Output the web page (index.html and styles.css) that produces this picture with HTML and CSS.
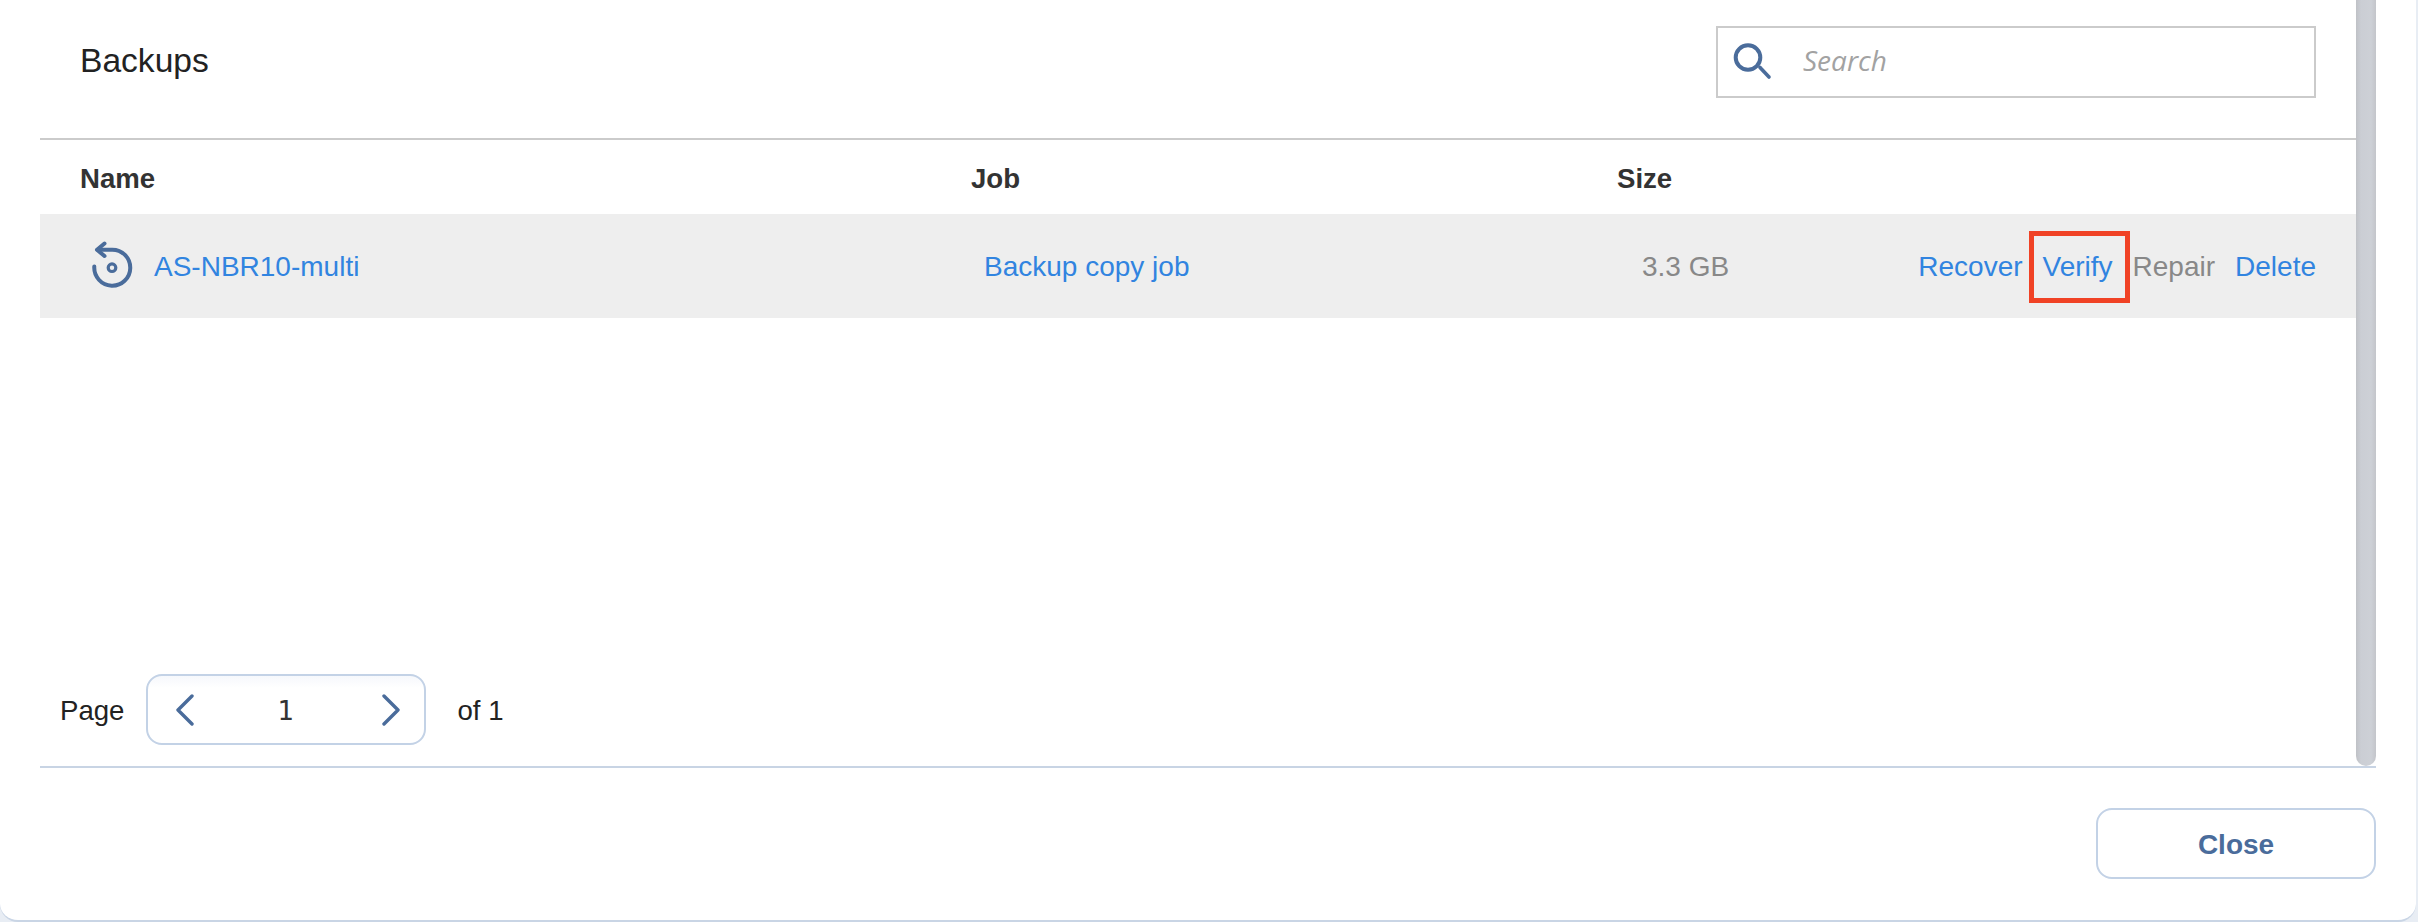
FILE: index.html
```html
<!DOCTYPE html>
<html lang="en">
<head>
<meta charset="utf-8">
<title>Backups</title>
<link rel="stylesheet" href="styles.css">
</head>
<body>
<div class="modal">
  <div class="content">
    <div class="main">
      <header class="top">
        <h1 class="title">Backups</h1>
        <div class="search">
          <svg class="search-icon" width="40" height="40" viewBox="0 0 40 40" fill="none" stroke="#4a6c9b" stroke-linecap="round">
            <circle cx="15" cy="15.5" r="12.3" stroke-width="4"/>
            <path d="M27 25.5 36 35" stroke-width="3.6"/>
          </svg>
          <span class="search-text">Search</span>
        </div>
      </header>
      <div class="grid head">
        <div class="h-name">Name</div>
        <div>Job</div>
        <div>Size</div>
      </div>
      <div class="grid row">
        <div class="cell-name">
          <svg class="disc" width="44" height="50" viewBox="0 0 44 50" fill="none" stroke="#4a6c9b" stroke-linecap="round" stroke-linejoin="round">
            <path d="M4.3 25.5A18 18 0 1 0 22 8.7H7.5" stroke-width="4"/>
            <path d="M14.5 2.5 7 8.7 14.5 15" stroke-width="4"/>
            <circle cx="22" cy="26.7" r="3.8" stroke-width="3.2"/>
          </svg>
          <a class="link">AS-NBR10-multi</a>
        </div>
        <div class="cell-job"><a class="link">Backup copy job</a></div>
        <div class="cell-size">
          <span class="muted size">3.3 GB</span>
          <div class="actions">
            <a class="link">Recover</a>
            <a class="link marked">Verify</a>
            <span class="muted">Repair</span>
            <a class="link">Delete</a>
          </div>
        </div>
      </div>
      <div class="pager-row">
        <span class="label">Page</span>
        <div class="pager">
          <svg width="18" height="32" viewBox="0 0 18 32" fill="none" stroke="#4a6c9b" stroke-width="3.4" stroke-linecap="round" stroke-linejoin="round"><path d="M16 2 2 16l14 14"/></svg>
          <span class="page-num">1</span>
          <svg width="18" height="32" viewBox="0 0 18 32" fill="none" stroke="#4a6c9b" stroke-width="3.4" stroke-linecap="round" stroke-linejoin="round"><path d="M2 2l14 14L2 30"/></svg>
        </div>
        <span class="label">of 1</span>
      </div>
    </div>
    <div class="scrollbar"></div>
  </div>
  <footer class="footer">
    <button class="close">Close</button>
  </footer>
</div>
</body>
</html>
```
FILE: styles.css
```css
html, body {
  margin: 0;
  height: 922px;
  overflow: hidden;
  background: #e8edf4;
}

body {
  font-family: "Liberation Sans", Arial, sans-serif;
}

.modal {
  box-sizing: border-box;
  width: 2416px;
  height: 922px;
  display: flex;
  flex-direction: column;
  background: #fff;
  border-bottom: 2px solid #c9d5e5;
  border-radius: 0 0 18px 18px;
}

.content {
  box-sizing: border-box;
  height: 768px;
  margin: 0 40px;
  display: flex;
  border-bottom: 2px solid #c8d4e4;
}

.main {
  flex: 1;
  display: flex;
  flex-direction: column;
  min-width: 0;
}

.scrollbar {
  width: 20px;
  border-radius: 0 0 10px 10px;
  background: linear-gradient(90deg, #bfc1c6, #cbced4 25%, #cdd0d6 75%, #c3c5ca);
}

.top {
  box-sizing: border-box;
  height: 140px;
  flex: none;
  display: flex;
  justify-content: space-between;
  align-items: flex-start;
  padding: 26px 40px 0 40px;
  border-bottom: 2px solid #cbcbcb;
}

.title {
  margin: -1px 0 0;
  font-size: 33.6px;
  line-height: 72px;
  font-weight: 400;
  color: #222;
}

.search {
  box-sizing: border-box;
  width: 600px;
  height: 72px;
  display: flex;
  align-items: center;
  gap: 30px;
  padding-left: 15px;
  border: 2px solid #cbcbcb;
}

.search-icon {
  flex: none;
}

.search-text {
  font-family: "Open Sans", sans-serif;
  font-style: italic;
  font-size: 28px;
  line-height: 36px;
  margin-top: -4px;
  color: #a2a2a2;
}

.grid {
  display: grid;
  grid-template-columns: 931px 646px 1fr;
  align-items: center;
  flex: none;
}

.head {
  box-sizing: border-box;
  height: 74px;
  padding-top: 4px;
  font-size: 27.6px;
  font-weight: 700;
  color: #333;
}

.h-name {
  padding-left: 40px;
}

.row {
  height: 104px;
  background: #eee;
  font-size: 28px;
}

.cell-name {
  display: flex;
  align-items: center;
  padding-left: 50px;
  gap: 20px;
}

.disc {
  flex: none;
}

.cell-name .link,
.cell-job,
.cell-size {
  padding-top: 2px;
}

.cell-job {
  padding-left: 13px;
}

.cell-size {
  display: flex;
  justify-content: space-between;
  align-items: center;
  padding: 2px 40px 0 25px;
}

.link {
  color: #3184e0;
}

.muted {
  color: #888;
}

.actions {
  display: flex;
  gap: 20px;
}

.marked {
  position: relative;
}

.marked::after {
  content: "";
  position: absolute;
  left: -14px;
  right: -17px;
  top: -20px;
  height: 72px;
  box-sizing: border-box;
  border: 5px solid #f04225;
}

.pager-row {
  margin-top: auto;
  margin-bottom: 21px;
  display: flex;
  align-items: center;
  padding-left: 20px;
  font-size: 27.6px;
  color: #222;
}

.label {
  padding-top: 2px;
}

.label:last-child {
  margin-left: 31px;
}

.pager {
  box-sizing: border-box;
  width: 280px;
  height: 71px;
  margin-left: 22px;
  display: flex;
  align-items: center;
  justify-content: space-between;
  padding: 0 24px 0 28px;
  border: 2px solid #c3d2e6;
  border-radius: 16px;
  background: linear-gradient(#f6f8fc, #fff 12px);
}

.page-num {
  font-family: "DejaVu Sans Mono", "Liberation Mono", monospace;
  font-size: 27px;
  margin-left: -6px;
  padding-top: 1px;
  color: #333;
}

.footer {
  flex: 1;
  display: flex;
  justify-content: flex-end;
  align-items: flex-start;
  padding: 40px 40px 0 0;
}

.close {
  box-sizing: border-box;
  width: 280px;
  height: 71px;
  padding: 2px 0 0;
  border: 2px solid #c3d2e6;
  border-radius: 16px;
  background: #fff;
  color: #4a6c9b;
  font-family: inherit;
  font-size: 28px;
  font-weight: 700;
}
```
